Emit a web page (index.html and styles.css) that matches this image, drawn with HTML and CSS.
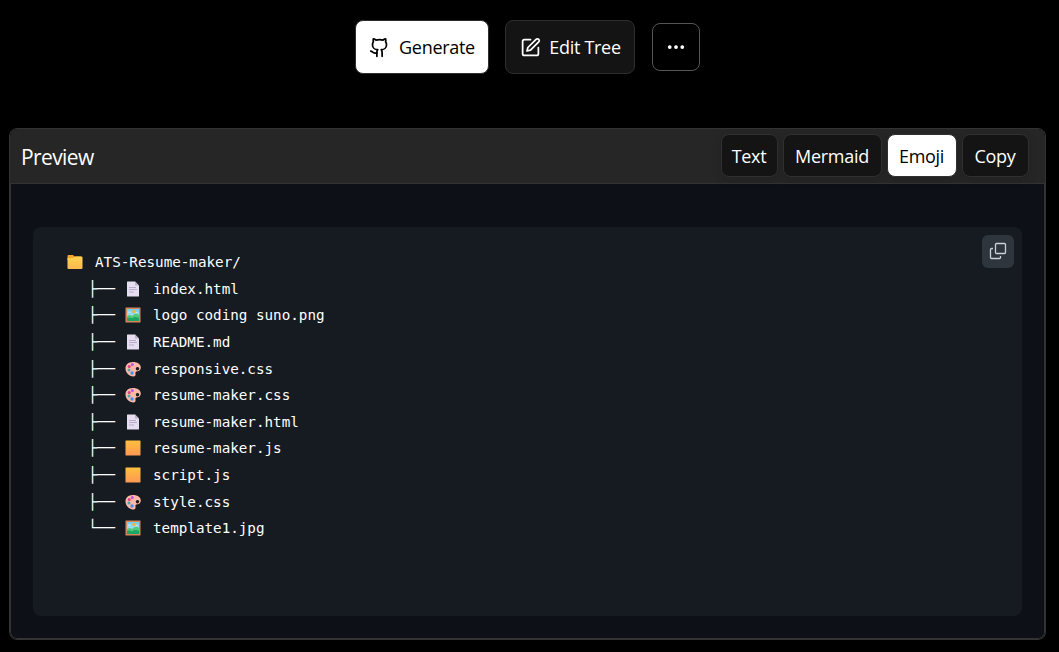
FILE: index.html
```html
<!DOCTYPE html>
<html lang="en">
<head>
  <meta charset="UTF-8">
  <title>Tree Preview</title>
  <link rel="stylesheet" href="styles.css">
</head>
<body>
  <!-- shared file icons -->
  <svg class="sprite" aria-hidden="true">
    <defs>
      <linearGradient id="folderFill" x1="0" y1="0" x2="0" y2="1">
        <stop offset="0" stop-color="#ffd34f"/>
        <stop offset="1" stop-color="#ffb950"/>
      </linearGradient>
      <linearGradient id="squareFill" x1="0" y1="0" x2="0" y2="1">
        <stop offset="0" stop-color="#ffbf3f"/>
        <stop offset="1" stop-color="#fd9853"/>
      </linearGradient>
      <linearGradient id="skyFill" x1="0" y1="0" x2="0" y2="1">
        <stop offset="0" stop-color="#72cdf0"/>
        <stop offset="1" stop-color="#c7eef4"/>
      </linearGradient>
    </defs>
    <symbol id="folder" viewBox="0 0 16 16">
      <path fill="#f4a62b" d="M0.5 2Q0.5 1 1.5 1H6l1.5 1.5H14V6H0.5z"/>
      <path fill="url(#folderFill)" d="M0.5 4H6l2-1.5h6.5q1 0 1 1v10.5q0 1-1 1h-13q-1 0-1-1z"/>
    </symbol>
    <symbol id="page" viewBox="0 0 16 16">
      <path fill="#e6def0" d="M2 1Q2 .5 2.500.5H10l4 4v10.500q0 .5-.5.5h-11q-.5 0-.5-.5z"/>
      <path fill="#bcb2c9" d="M10 .5l4 4h-3.500q-.5 0-.5-.5z"/>
      <path stroke="#b9adc7" stroke-width="1" d="M4 6.500h7M4 8.500h8M4 11h5"/>
    </symbol>
    <symbol id="picture" viewBox="0 0 16 16">
      <rect x="0.500" y="0.500" width="15" height="15" rx=".5" fill="#d5875a"/>
      <rect x="2" y="2" width="12" height="12" fill="url(#skyFill)"/>
      <circle cx="9" cy="4.500" r="1.700" fill="#f8b52f"/>
      <path fill="#e9f8fa" d="M3 5.500q1.500-2 3 0zM10 6q1.500-1.500 3 0z"/>
      <path fill="#54c979" d="M2 9q3-2 5 0 4-4 7-1v6H2z"/>
      <path fill="#20a464" d="M2 11q3-1 5 .5Q10 9 14 11v3H2z"/>
    </symbol>
    <symbol id="palette" viewBox="0 0 16 16">
      <path fill="#ffb8a3" fill-rule="evenodd" d="M7.500 1C12 .8 15.800 3 15.800 6.500c0 2.500-1.500 3.500-3.300 3.800-2 .3-2.200 1-2 2.200.4 1.800-.5 3-2 3C4 15.500.5 11.500.5 7.500S3.500 1.200 7.500 1zM12.500 6a1.700 1.700 0 1 0 .01 0z"/>
      <circle cx="7.300" cy="3.500" r="1.500" fill="#b659e8"/>
      <circle cx="4.200" cy="5.500" r="1.500" fill="#e63e79"/>
      <circle cx="4" cy="9" r="1.500" fill="#4aa6ad"/>
      <circle cx="7" cy="12" r="1.700" fill="#438df5"/>
    </symbol>
    <symbol id="square" viewBox="0 0 16 16">
      <rect x="0.500" y="0.500" width="15" height="15" rx=".5" fill="url(#squareFill)"/>
    </symbol>
  </svg>

  <div class="toolbar">
    <button class="btn btn-generate">
      <svg class="icon" viewBox="0 0 24 24"><path d="M15 22v-4a4.800 4.800 0 0 0-1-3.500c3 0 6-2 6-5.500.08-1.250-.27-2.480-1-3.500.28-1.150.28-2.350 0-3.500 0 0-1 0-3 1.500-2.640-.5-5.360-.5-8 0C6 2 5 2 5 2c-.3 1.150-.3 2.350 0 3.500A5.403 5.403 0 0 0 4 9c0 3.500 3 5.500 6 5.500-.39.490-.68 1.050-.85 1.650-.17.600-.22 1.230-.15 1.850v4"/><path d="M9 18c-4.510 2-5-2-7-2"/></svg>
      <span>Generate</span>
    </button>
    <button class="btn btn-edit">
      <svg class="icon" viewBox="0 0 24 24"><path d="M12 3H5a2 2 0 0 0-2 2v14a2 2 0 0 0 2 2h14a2 2 0 0 0 2-2v-7"/><path d="M18.375 2.625a2.121 2.121 0 1 1 3 3L12 15l-4 1 1-4Z"/></svg>
      <span>Edit Tree</span>
    </button>
    <button class="btn btn-more">
      <svg class="icon dots" viewBox="0 0 24 24"><circle cx="4.500" cy="12" r="1.500"/><circle cx="12" cy="12" r="1.500"/><circle cx="19.500" cy="12" r="1.500"/></svg>
    </button>
  </div>

  <div class="panel">
    <div class="panel-header">
      <h2>Preview</h2>
      <div class="tabs">
        <button class="tab tab-text">Text</button>
        <button class="tab tab-mermaid">Mermaid</button>
        <button class="tab tab-emoji active">Emoji</button>
        <button class="tab tab-copy">Copy</button>
      </div>
    </div>
    <div class="panel-body">
      <div class="code">
        <div class="tree">
          <div class="row root"><svg class="emoji"><use href="#folder"/></svg><span class="name">ATS-Resume-maker/</span></div>
          <div class="row"><span class="branch">├──</span><svg class="emoji"><use href="#page"/></svg><span class="name">index.html</span></div>
          <div class="row"><span class="branch">├──</span><svg class="emoji"><use href="#picture"/></svg><span class="name">logo coding suno.png</span></div>
          <div class="row"><span class="branch">├──</span><svg class="emoji"><use href="#page"/></svg><span class="name">README.md</span></div>
          <div class="row"><span class="branch">├──</span><svg class="emoji"><use href="#palette"/></svg><span class="name">responsive.css</span></div>
          <div class="row"><span class="branch">├──</span><svg class="emoji"><use href="#palette"/></svg><span class="name">resume-maker.css</span></div>
          <div class="row"><span class="branch">├──</span><svg class="emoji"><use href="#page"/></svg><span class="name">resume-maker.html</span></div>
          <div class="row"><span class="branch">├──</span><svg class="emoji"><use href="#square"/></svg><span class="name">resume-maker.js</span></div>
          <div class="row"><span class="branch">├──</span><svg class="emoji"><use href="#square"/></svg><span class="name">script.js</span></div>
          <div class="row"><span class="branch">├──</span><svg class="emoji"><use href="#palette"/></svg><span class="name">style.css</span></div>
          <div class="row"><span class="branch">└──</span><svg class="emoji"><use href="#picture"/></svg><span class="name">template1.jpg</span></div>
        </div>
        <button class="copy-btn" aria-label="Copy">
          <svg viewBox="0 0 18 18"><rect x="6.500" y="1.500" width="10" height="10" rx="1"/><path d="M4 6.500H2.500a1 1 0 0 0-1 1v8a1 1 0 0 0 1 1h8a1 1 0 0 0 1-1V14"/></svg>
        </button>
      </div>
    </div>
  </div>
</body>
</html>
```

FILE: styles.css
```css
* {
  box-sizing: border-box;
}

body {
  margin: 0;
  height: 652px;
  overflow: hidden;
  background-color: #000;
  color: #fff;
  font-family: "Segoe UI", "Open Sans", "Noto Sans", sans-serif;
}

button {
  font-family: inherit;
  padding: 0;
}

.sprite {
  display: block;
  width: 0;
  height: 0;
}

.toolbar {
  display: flex;
  justify-content: center;
  align-items: center;
  gap: 16px;
  height: 54px;
  margin: 20px 4px 0 0;
}

.btn {
  display: flex;
  align-items: center;
  justify-content: center;
  height: 54px;
  border: 1px solid #2e2e2e;
  border-radius: 8px;
  background-color: #141414;
  color: #fff;
  font-size: 18px;
  letter-spacing: -0.3px;
}

.btn-generate {
  width: 134px;
  gap: 9px;
  background-color: #fff;
  color: #000;
}

.btn-edit {
  width: 130px;
  gap: 8px;
  padding-left: 1px;
}

.btn-more {
  width: 48px;
  height: 48px;
  margin-left: 1px;
  border-color: #555;
  background-color: #000;
}

.icon {
  width: 21px;
  height: 21px;
  fill: none;
  stroke: currentColor;
  stroke-width: 2;
  stroke-linecap: round;
  stroke-linejoin: round;
}

.dots {
  width: 20px;
  height: 20px;
  margin-right: 1px;
  fill: currentColor;
  stroke-width: 1.5;
}

.panel {
  width: 1037px;
  height: 512px;
  margin: 54px 0 0 9px;
  border: 1px solid #333;
  border-radius: 8px;
  overflow: hidden;
}

.panel-header {
  display: flex;
  align-items: center;
  justify-content: space-between;
  height: 55px;
  padding: 0 16px 0 11px;
  border-bottom: 1px solid #333;
  background-color: #262626;
}

.panel-header h2 {
  margin: 0;
  padding-top: 2px;
  font-size: 21px;
  font-weight: 400;
  letter-spacing: -0.6px;
}

.tabs {
  display: flex;
  gap: 5px;
  margin-bottom: 1px;
}

.tab {
  height: 43px;
  padding-right: 1px;
  border: 1px solid #303030;
  border-radius: 8px;
  background-color: #141414;
  color: #fff;
  font-size: 18px;
  letter-spacing: -0.3px;
  box-shadow: 0 3px 8px rgba(0, 0, 0, 0.12);
}

.tab-text {
  width: 57px;
}

.tab-mermaid {
  width: 99px;
}

.tab-emoji {
  width: 70px;
}

.tab-copy {
  width: 67px;
}

.tab.active {
  background-color: #fff;
  color: #000;
}

.panel-body {
  height: 455px;
  padding: 43px 22px 0;
  border: 1px solid #333;
  border-top: 0;
  border-radius: 0 0 7px 7px;
  background-color: #0d1117;
}

.code {
  display: flex;
  justify-content: space-between;
  align-items: flex-start;
  height: 389px;
  padding: 8px 8px 0 34px;
  border-radius: 8px;
  background-color: #161b22;
}

.tree {
  padding-top: 13.9px;
}

.row {
  display: flex;
  align-items: center;
  height: 26.62px;
  padding-left: 21px;
  font-family: "DejaVu Sans Mono", monospace;
  font-size: 14.26px;
  white-space: pre;
}

.root {
  padding-left: 0;
}

.branch {
  width: 37px;
  font-size: 15px;
}

.emoji {
  width: 16px;
  height: 16px;
  margin-right: 12px;
}

.copy-btn {
  display: flex;
  align-items: center;
  justify-content: center;
  width: 32px;
  height: 33px;
  border: 0;
  border-radius: 6px;
  background-color: #2f353d;
}

.copy-btn svg {
  width: 18px;
  height: 18px;
  margin-bottom: 1px;
  fill: none;
  stroke: #c9d1d9;
  stroke-width: 1.3;
}
```
